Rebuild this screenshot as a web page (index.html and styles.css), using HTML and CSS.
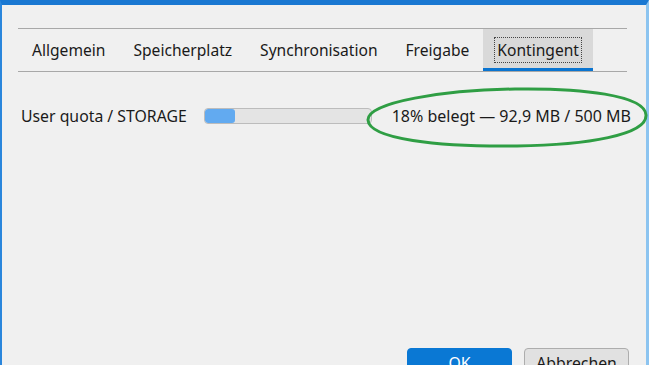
FILE: index.html
```html
<!DOCTYPE html>
<html lang="de">
<head>
  <meta charset="UTF-8">
  <title>Eigenschaften</title>
  <link rel="stylesheet" href="styles.css">
</head>
<body>

  <div class="window">
    <div class="tabs">
      <div class="tab">Allgemein</div>
      <div class="tab">Speicherplatz</div>
      <div class="tab">Synchronisation</div>
      <div class="tab">Freigabe</div>
      <div class="tab active"><span class="focus">Kontingent</span></div>
    </div>

    <div class="quota-row">
      <span class="quota-label">User quota / STORAGE</span>
      <div class="bar"><div class="bar-fill" style="width: 18%"></div></div>
      <span class="quota-text">18% belegt — 92,9 MB / 500 MB</span>
      <svg class="mark" width="286" height="62" viewBox="0 0 286 62">
        <path d="M150 2 C 216 1, 280 8, 281 28 C 282 48, 222 58, 152 59 C 72 60, 4 52, 3 33 C 2 15, 80 3, 150 2 Z"
              fill="none" stroke="#2f9e44" stroke-width="3"/>
      </svg>
    </div>

    <div class="buttons">
      <button class="btn primary">OK</button>
      <button class="btn">Abbrechen</button>
    </div>
  </div>

</body>
</html>
```

FILE: styles.css
```css
* {
  box-sizing: border-box;
}

body {
  margin: 0;
  padding: 0;
  font-family: "Noto Sans", "Open Sans", sans-serif;
  color: #1a1a1a;
  background: #f0f0f0;
  overflow: hidden;
}

.window {
  height: 390px;
  background: #f0f0f0;
  border-top: 5px solid #1a78d2;
  border-left: 2px solid #2a86dc;
  border-right: 3px solid #8cc4f0;
  padding: 23px 19px 0 16px;
  display: flex;
  flex-direction: column;
}

.tabs {
  display: flex;
  height: 44px;
  border-top: 1px solid #a8a8a8;
  border-bottom: 1px solid #a8a8a8;
  font-size: 15.6px;
}

.tab {
  display: flex;
  align-items: center;
  padding: 0 14px;
}

.tab.active {
  background: #d9d9d9;
  border-bottom: 3px solid #0a74d0;
  padding-top: 2px;
}

.focus {
  outline: 1px dotted #444;
  outline-offset: 2px;
  line-height: 20px;
}

.quota-row {
  position: relative;
  display: flex;
  align-items: center;
  margin-top: 32px;
  padding: 0 0 0 3px;
  height: 24px;
  font-size: 15.8px;
}

.quota-label {
  width: 183px;
}

.bar {
  width: 168px;
  height: 16px;
  background: #e4e4e4;
  border: 1px solid #bcbcbc;
  border-radius: 4px;
  overflow: hidden;
}

.bar-fill {
  height: 100%;
  background: #62aaf0;
  border-radius: 3px;
}

.quota-text {
  margin-left: auto;
  margin-right: -4px;
  font-size: 16px;
}

.mark {
  position: absolute;
  left: 347px;
  top: -17px;
}

.buttons {
  display: flex;
  justify-content: flex-end;
  gap: 12px;
  margin-top: 220px;
  margin-right: -2px;
}

.btn {
  width: 105px;
  height: 30px;
  font-family: inherit;
  font-size: 15.8px;
  color: #1a1a1a;
  background: #e1e1e1;
  border: 1px solid #adadad;
  border-radius: 4px;
}

.btn.primary {
  background: #0a78d4;
  border-color: #0a78d4;
  color: white;
}
```
